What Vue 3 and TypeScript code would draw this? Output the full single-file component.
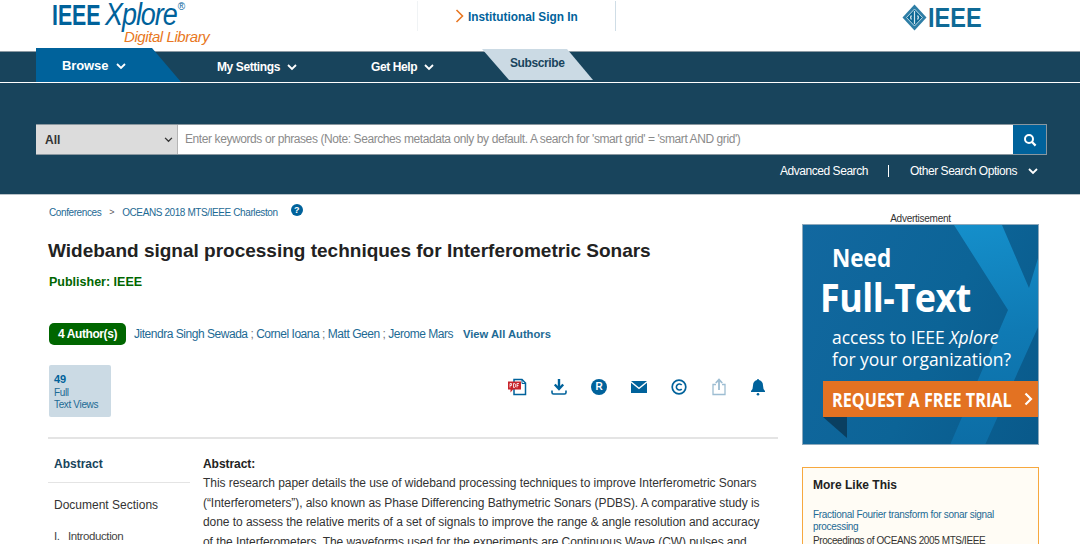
<script setup lang="ts">
const authors = ['Jitendra Singh Sewada', 'Cornel Ioana', 'Matt Geen', 'Jerome Mars']
const abstractLines = [
  'This research paper details the use of wideband processing techniques to improve Interferometric Sonars',
  '(“Interferometers”), also known as Phase Differencing Bathymetric Sonars (PDBS). A comparative study is',
  'done to assess the relative merits of a set of signals to improve the range & angle resolution and accuracy',
  'of the Interferometers. The waveforms used for the experiments are Continuous Wave (CW) pulses and',
]
</script>

<template>
  <div class="page">
    <header class="top">
      <div class="logo">
        <div class="logo__main"><b>IEEE</b><i>Xplore</i><sup>®</sup></div>
        <div class="logo__sub">Digital Library</div>
      </div>
      <div class="signin">
        <svg width="9" height="14" viewBox="0 0 9 14"><path d="M1.5 1l6 6-6 6" fill="none" stroke="#e87722" stroke-width="1.6" /></svg>
        <span>Institutional Sign In</span>
      </div>
      <div class="ieee">
        <svg width="25" height="27" viewBox="0 0 25 27">
          <path d="M12.5 0.5L24.5 13.5L12.5 26.5L0.5 13.5Z" fill="#2e7ea6" />
          <path d="M12.5 5L20.5 13.5L12.5 22L4.5 13.5Z" fill="#0f6a96" stroke="#b9d6e4" stroke-width="1" />
          <path d="M12.5 7v13M9.5 11.5a3 3 0 0 0 0 4M15.5 11.5a3 3 0 0 1 0 4" fill="none" stroke="#d5e6ee" stroke-width="1.2" />
        </svg>
        <span>IEEE</span>
      </div>
    </header>

    <nav class="nav">
      <a class="nav__browse">Browse
        <svg class="chev" viewBox="0 0 10 7"><path d="M1 1l4 4 4-4" /></svg>
      </a>
      <a class="nav__item nav__item--settings">My Settings
        <svg class="chev" viewBox="0 0 10 7"><path d="M1 1l4 4 4-4" /></svg>
      </a>
      <a class="nav__item nav__item--help">Get Help
        <svg class="chev" viewBox="0 0 10 7"><path d="M1 1l4 4 4-4" /></svg>
      </a>
      <a class="nav__sub">Subscribe</a>
    </nav>

    <section class="search">
      <div class="search__bar">
        <div class="search__scope">
          <span>All</span>
          <svg width="9" height="6" viewBox="0 0 10 7"><path d="M1 1l4 4 4-4" fill="none" stroke="#333" stroke-width="1.5" /></svg>
        </div>
        <div class="search__input">Enter keywords or phrases (Note: Searches metadata only by default. A search for 'smart grid' = 'smart AND grid')</div>
        <div class="search__btn">
          <svg width="14" height="14" viewBox="0 0 14 14"><circle cx="6" cy="6" r="4" fill="none" stroke="#fff" stroke-width="2" /><path d="M9 9l3.6 3.6" stroke="#fff" stroke-width="2.2" /></svg>
        </div>
      </div>
      <div class="search__links">
        <span>Advanced Search</span>
        <i class="search__sep"></i>
        <span>Other Search Options</span>
        <svg class="chev" viewBox="0 0 10 7"><path d="M1 1l4 4 4-4" /></svg>
      </div>
    </section>

    <div class="body">
      <main class="content">
        <div class="crumbs">
          <span>Conferences</span><em>&gt;</em><span>OCEANS 2018 MTS/IEEE Charleston</span>
          <b class="help">?</b>
        </div>
        <h1>Wideband signal processing techniques for Interferometric Sonars</h1>
        <div class="publisher">Publisher: IEEE</div>

        <div class="authors">
          <span class="authors__pill">4 Author(s)</span>
          <span class="authors__list">
            <template v-for="(a, i) in authors" :key="a">
              <span v-if="i > 0" class="semi"> ; </span>{{ a }}
            </template>
          </span>
          <b class="authors__all">View All Authors</b>
        </div>

        <div class="metrics">
          <div class="views">
            <b>49</b>
            <span>Full</span>
            <span>Text Views</span>
          </div>
          <div class="tools">
            <svg class="tool tool--pdf" width="20" height="18" viewBox="0 0 20 18">
              <path d="M7 1.5h8l3.5 3.500v11.500H7z" fill="#fff" stroke="#00629b" stroke-width="1.5" />
              <path d="M15 1.500v4h3.500" fill="none" stroke="#00629b" stroke-width="1" />
              <path d="M1 3.500h13v8H6l-2.500 3V11.500H1z" fill="#c8242b" />
              <path d="M3 9.500v-4h1.500v2H3M6.500 5.500v4h1q1 0 1-2t-1-2zM10 9.500v-4h2M10 7.500h1.500" fill="none" stroke="#fff" stroke-width=".8" />
            </svg>
            <svg class="tool" width="16" height="18" viewBox="0 0 16 18">
              <path d="M8 1v9M3.800 6.500L8 11l4.200-4.500" fill="none" stroke="#00629b" stroke-width="2.400" />
              <path d="M1 12.500v2q0 1.500 1.500 1.500h11q1.500 0 1.500-1.500v-2" fill="none" stroke="#00629b" stroke-width="1.600" />
            </svg>
            <span class="tool tool--r">R</span>
            <svg class="tool" width="16" height="12" viewBox="0 0 16 12">
              <path d="M0 0h16L8 6.500z" fill="#00629b" />
              <path d="M0 1.800L8 8.300l8-6.500V12H0z" fill="#00629b" />
            </svg>
            <svg class="tool" width="16" height="16" viewBox="0 0 16 16">
              <circle cx="8" cy="8" r="6.800" fill="none" stroke="#00629b" stroke-width="1.700" />
              <path d="M10.700 6.100a3 3 0 1 0 0 3.800" fill="none" stroke="#00629b" stroke-width="1.600" />
            </svg>
            <svg class="tool tool--wide" width="14" height="18" viewBox="0 0 14 18">
              <path d="M4 6.500H1v10h12v-10h-3" fill="none" stroke="#9dbdd2" stroke-width="1.300" />
              <path d="M7 12V2M3.800 5L7 1.500 10.200 5" fill="none" stroke="#9dbdd2" stroke-width="1.800" />
            </svg>
            <svg class="tool tool--wide" width="14" height="18" viewBox="0 0 14 18">
              <path d="M7 1q1 0 1 1q4 1 4 5.500q0 4 2 5.500v1H0v-1q2-1.500 2-5.500q0-4.500 4-5.500q0-1 1-1z" fill="#00629b" />
              <circle cx="7" cy="16.200" r="1.300" fill="#00629b" />
            </svg>
          </div>
        </div>

        <div class="article">
          <aside class="side">
            <div class="side__active">Abstract</div>
            <div class="side__title">Document Sections</div>
            <div class="side__row"><span>I.</span>Introduction</div>
          </aside>
          <section class="abstract">
            <strong>Abstract:</strong>
            <div v-for="l in abstractLines" :key="l" class="abstract__line">{{ l }}</div>
          </section>
        </div>
      </main>

      <aside class="rail">
        <div class="rail__label">Advertisement</div>
        <div class="ad">
          <div class="ad__x"></div>
          <div class="ad__fold"></div>
          <div class="ad__copy">
            <div class="ad__need">Need</div>
            <div class="ad__full">Full-Text</div>
            <div class="ad__small">access to IEEE <i>Xplore</i></div>
            <div class="ad__small">for your organization?</div>
          </div>
          <div class="ad__cta">
            <span>REQUEST A FREE TRIAL</span>
            <svg width="9" height="14" viewBox="0 0 9 14"><path d="M1.500 1.500L7 7l-5.500 5.500" fill="none" stroke="#fff" stroke-width="2.200" /></svg>
          </div>
        </div>
        <div class="more">
          <h3>More Like This</h3>
          <a>Fractional Fourier transform for sonar signal processing</a>
          <p>Proceedings of OCEANS 2005 MTS/IEEE</p>
        </div>
      </aside>
    </div>
  </div>
</template>

<style>
html, body { margin: 0; overflow: hidden; background: #fff; }
</style>

<style scoped>
.page { width: 1080px; height: 544px; overflow: hidden; font-family: "Liberation Sans", Arial, sans-serif; color: #222; }
a { color: inherit; }

.top { height: 51px; display: flex; align-items: flex-start; }
.logo { width: 417px; padding-left: 52px; box-sizing: border-box; height: 51px; color: #00629b; }
.logo__main { display: flex; font-size: 30px; line-height: 30px; height: 30px; white-space: nowrap; }
.logo__main b { display: block; flex: none; transform: scaleX(.71); transform-origin: left; margin-right: -15px; font-weight: 700; }
.logo__main i { display: block; flex: none; letter-spacing: -1.2px; font-size: 31px; transform: scaleX(.87); transform-origin: left; }
.logo__main sup { font-size: 10px; line-height: 12px; margin: 1px 0 0 -10px; }
.logo__sub { font-size: 15px; line-height: 18px; font-style: italic; color: #e87722; margin-left: 72px; margin-top: -2px; letter-spacing: -.42px; white-space: nowrap; }
.signin { width: 199px; height: 30px; margin-top: 1px; border-left: 1px solid #f0f3f5; border-right: 1px solid #cfdde6; display: flex; align-items: center; gap: 4px; padding-left: 37px; box-sizing: border-box; color: #00629b; font-size: 13px; font-weight: 700; white-space: nowrap; }
.signin span { display: inline-block; transform: scaleX(.91); transform-origin: left; }
.ieee { margin-left: 286px; margin-top: 4px; display: flex; align-items: center; gap: 1px; color: #0f6a96; }
.ieee span { font-size: 28px; line-height: 27px; font-weight: 700; display: inline-block; transform: scaleX(.84); transform-origin: left; }

.nav { height: 30px; padding-left: 36px; border-top: 1px solid #8c9aa3; background: #18445c; display: flex; align-items: stretch; border-bottom: 1px solid #fff; color: #fff; font-weight: 700; font-size: 12px; letter-spacing: -.4px; }
.chev { width: 10px; height: 7px; margin-left: 6px; fill: none; stroke: currentColor; stroke-width: 1.800; }
.nav .chev { margin-left: 4px; }
.nav__browse { width: 145px; height: 34px; margin-top: -4px; background: #00629b; clip-path: polygon(0 0, 116px 0, 145px 100%, 0 100%); box-sizing: border-box; padding-left: 26px; padding-top: 10px; font-size: 13px; line-height: 16px; flex: none; letter-spacing: -.1px; }
.nav__item { display: block; padding-top: 7px; line-height: 16px; flex: none; }
.nav__item--settings { margin-left: 36px; width: 154px; }
.nav__item--help { width: 111px; }
.nav__sub { width: 111px; height: 31px; margin-top: -3px; background: #cbdae4; color: #18445c; clip-path: polygon(0 0, 85px 0, 111px 100%, 27px 100%); box-sizing: border-box; padding-left: 28px; padding-top: 6px; line-height: 16px; font-size: 12px; flex: none; letter-spacing: -.4px; }

.search { background: #18445c; height: 112px; border-bottom: 1px solid #b9c2c8; box-sizing: border-box; padding: 41px 33px 0 36px; color: #fff; }
.search__bar { display: flex; height: 31px; border: 1px solid #8a979f; border-left: 0; box-sizing: border-box; background: #fff; }
.search__scope { width: 142px; background: #dcdcdc; border-right: 1px solid #b5b5b5; box-sizing: border-box; display: flex; align-items: center; justify-content: space-between; padding: 0 4px 0 9px; color: #333; font-size: 12px; font-weight: 700; }
.search__input { flex: 1; color: #8b8b8b; font-size: 12px; line-height: 29px; padding-left: 7px; white-space: nowrap; overflow: hidden; letter-spacing: -.41px; }
.search__btn { width: 33px; background: #00629b; display: flex; align-items: center; justify-content: center; }
.search__links { display: flex; justify-content: flex-end; align-items: center; height: 16px; margin-top: 8px; padding-right: 9px; font-size: 12px; letter-spacing: -.45px; }
.search__sep { width: 1px; height: 12px; background: #fff; margin: 0 21px 0 20px; }
.search__links .chev { margin-left: 11px; }

.body { display: flex; align-items: flex-start; }
.content { width: 730px; margin-left: 48px; flex: none; }
.crumbs { display: flex; align-items: center; height: 16px; margin-top: 9px; padding-left: 1px; font-size: 10px; color: #1d6a94; white-space: nowrap; letter-spacing: -.4px; }
.crumbs em { font-style: normal; margin: 0 8px; color: #555; font-size: 9px; }
.help { width: 12px; height: 12px; border-radius: 50%; background: #00629b; color: #fff; font-size: 9px; line-height: 12px; text-align: center; margin: -5px 0 0 13px; letter-spacing: 0; }
h1 { margin: 18px 0 0; font-size: 19px; line-height: 26px; font-weight: 700; color: #222; white-space: nowrap; }
.publisher { margin: 10px 0 0 1px; font-size: 12.500px; line-height: 16px; font-weight: 700; color: #006600; }

.authors { display: flex; align-items: center; margin: 33px 0 0 1px; font-size: 12px; white-space: nowrap; }
.authors__pill { width: 77px; height: 22px; border-radius: 5px; background: #006600; color: #fff; font-weight: 700; line-height: 22px; text-align: center; flex: none; letter-spacing: -.4px; }
.authors__list { margin-left: 8px; color: #1d6a94; white-space: pre; width: 329px; flex: none; letter-spacing: -.47px; }
.semi { color: #777; }
.authors__all { color: #1d6a94; font-size: 11.200px; }

.metrics { display: flex; justify-content: space-between; margin-top: 20px; padding: 0 0 20px 1px; border-bottom: 2px solid #e4e4e4; height: 52px; }
.views { width: 62px; height: 52px; background: #cbdae4; border-radius: 2px; box-sizing: border-box; padding: 8px 0 0 5px; display: flex; flex-direction: column; font-size: 10px; line-height: 12px; color: #1d6a94; letter-spacing: -.35px; }
.views b { font-size: 11px; line-height: 12px; margin-bottom: 2px; color: #00629b; letter-spacing: 0; }
.tools { display: flex; align-items: center; height: 44px; padding-right: 13px; }
.tool { flex: none; margin-left: 24px; }
.tool--pdf { margin-left: 0; }
.tool--wide { margin-left: 25px; }
.tool--r { width: 16px; height: 16px; border-radius: 50%; background: #00629b; color: #fff; font-size: 10px; font-weight: 700; line-height: 16px; text-align: center; }

.article { display: flex; margin-top: 17px; }
.side { width: 142px; flex: none; margin-right: 13px; }
.side__active { font-size: 12px; font-weight: 700; line-height: 16px; color: #18445c; padding: 0 0 10px 6px; border-bottom: 1px solid #e4e4e4; }
.side__title { margin-top: 14px; padding-left: 6px; font-size: 12px; line-height: 16px; color: #333; }
.side__row { margin-top: 15px; padding-left: 6px; font-size: 11.500px; line-height: 16px; color: #444; letter-spacing: -.4px; }
.side__row span { display: inline-block; width: 14px; }
.abstract { font-size: 12px; line-height: 19.500px; color: #333; white-space: nowrap; margin-top: -2px; letter-spacing: -.06px; }
.abstract strong { display: block; color: #222; line-height: 20px; }

.rail { width: 237px; margin-left: 24px; flex: none; }
.rail__label { height: 11px; margin-top: 18px; font-size: 10px; line-height: 12px; text-align: center; color: #333; letter-spacing: -.25px; }
.ad { position: relative; height: 221px; box-sizing: border-box; border: 1px solid #8ea9bc; overflow: hidden; background: linear-gradient(115deg, #1268a0 0%, #0c6497 55%, #09598a 100%); color: #fff; font-family: "Open Sans", sans-serif; }
.ad__x { position: absolute; inset: 0; background: linear-gradient(170deg, #1694d0 0%, #0f7ab4 55%, #0c6ca4 100%); clip-path: polygon(151px 0, 199px 0, 226px 63px, 236px 30px, 236px 100px, 182px 220px, 147px 220px, 205px 85px); }
.ad__fold { position: absolute; left: 20px; top: 192px; width: 24px; height: 21px; background: #0a3f60; clip-path: polygon(0 0, 100% 0, 100% 100%); }
.ad__copy { position: relative; padding: 16px 0 0 29px; }
.ad__need { font-size: 25px; line-height: 32px; margin-bottom: 2px; font-weight: 700; transform: scaleX(.9); transform-origin: left; }
.ad__full { margin-left: -12px; font-size: 39px; line-height: 44px; font-weight: 700; letter-spacing: -.5px; transform: scaleX(.92); transform-origin: left; white-space: nowrap; }
.ad__small { font-size: 19px; line-height: 22px; white-space: nowrap; transform: scaleX(.92); transform-origin: left; }
.ad__small:nth-child(3) { margin-top: 7px; }
.ad__cta { position: absolute; left: 20px; right: 0; top: 156px; height: 36px; background: #e37222; display: flex; align-items: center; padding-left: 9px; font-size: 20px; font-weight: 700; white-space: nowrap; }
.ad__cta span { display: block; width: 192px; flex: none; transform: scaleX(.81); transform-origin: left; }

.more { margin-top: 22px; border: 1px solid #f7a83e; background: #fffcf5; height: 120px; padding: 0 10px; box-sizing: border-box; }
.more h3 { margin: 9px 0 0; font-size: 12px; line-height: 16px; font-weight: 700; color: #222; }
.more a { display: block; margin-top: 16px; font-size: 10px; line-height: 11.500px; color: #1d6a94; letter-spacing: -.3px; }
.more p { margin: 3px 0 0; font-size: 10px; line-height: 12px; color: #333; white-space: nowrap; letter-spacing: -.4px; }
</style>
